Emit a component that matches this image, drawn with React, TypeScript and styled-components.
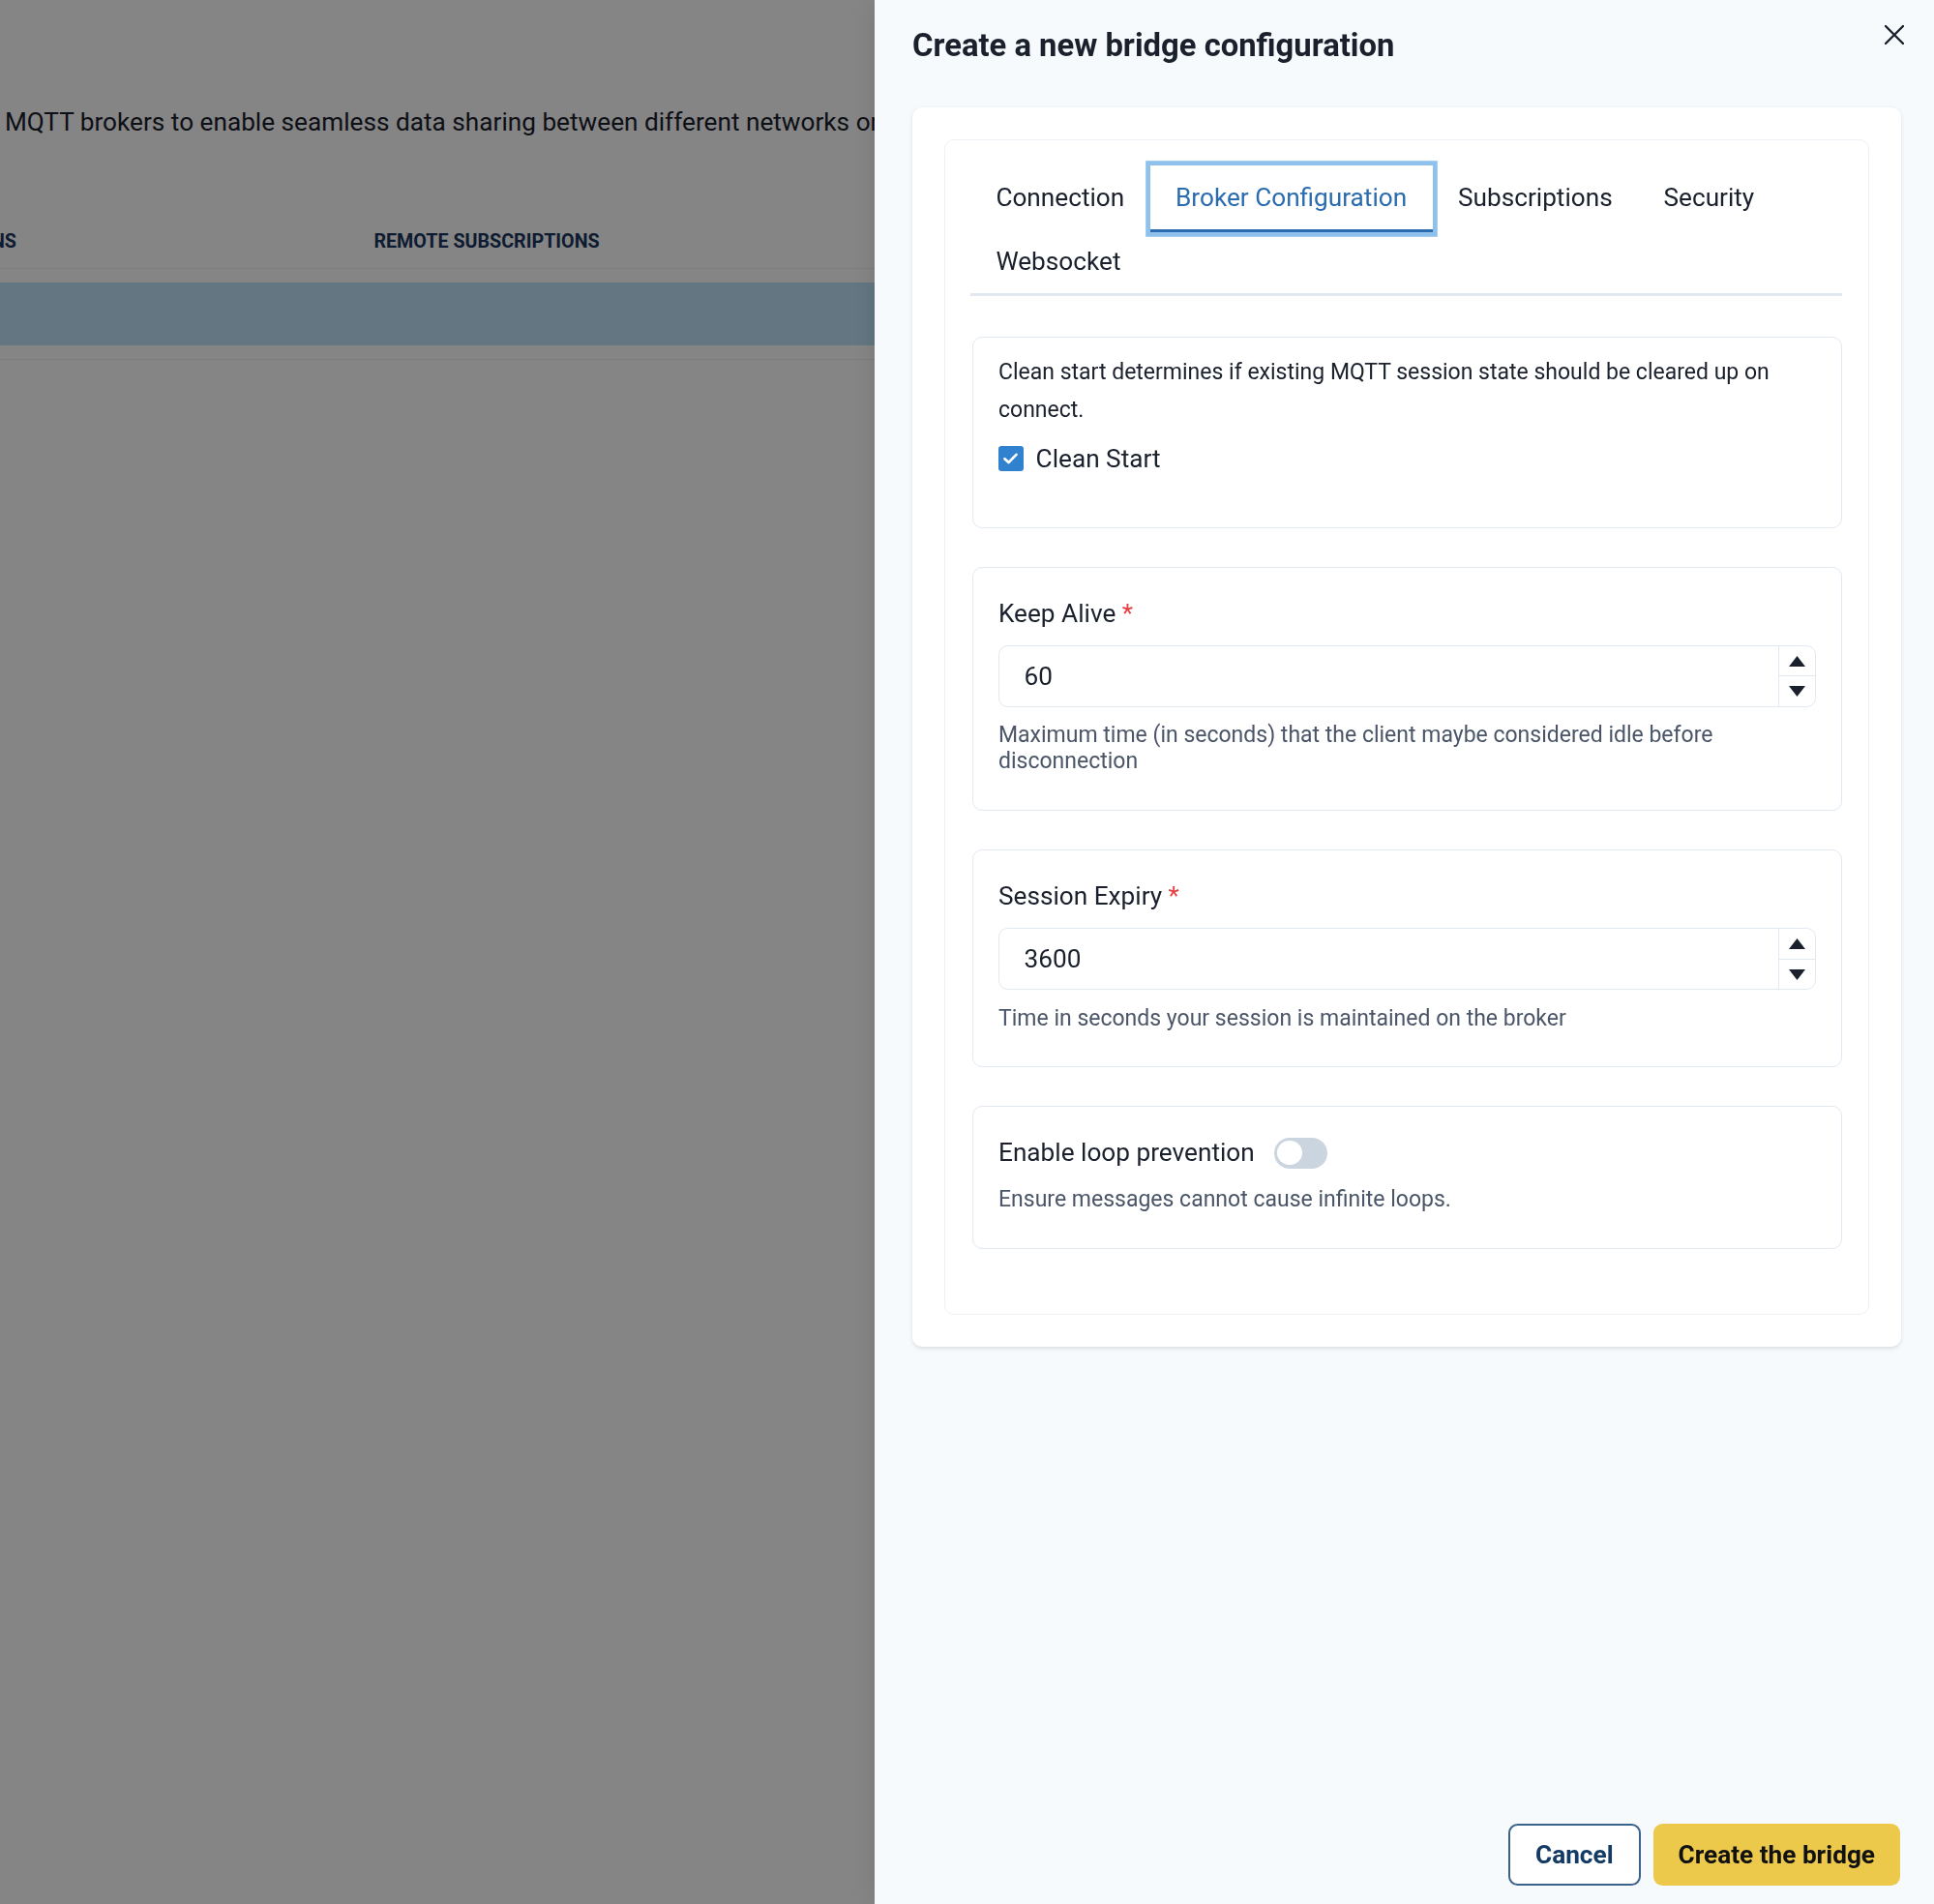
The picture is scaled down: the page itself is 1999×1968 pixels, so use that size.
import React, { useState } from 'react';
import styled, { createGlobalStyle } from 'styled-components';

const GlobalStyle = createGlobalStyle`
  html, body {
    margin: 0;
    padding: 0;
    background: #ffffff;
  }
  body {
    font-family: Roboto, 'Liberation Sans', Arial, sans-serif;
    color: #1a202c;
    -webkit-font-smoothing: antialiased;
  }
  * {
    box-sizing: border-box;
  }
`;

// page behind the drawer
const Page = styled.div`
  position: relative;
  width: 100%;
  height: 1968px;
  overflow: hidden;
  background: #ffffff;
`;

const Intro = styled.p`
  margin: 0;
  padding: 107px 0 0 5px;
  font-size: 26.2px;
  line-height: 39px;
  white-space: nowrap;
  color: #1a202c;
`;

const Table = styled.div`
  margin-top: 76px;
  margin-left: -238px;
  width: 2300px;
`;

const HeadRow = styled.div`
  display: grid;
  grid-template-columns: 586px 1fr;
  border-bottom: 1.6px solid #edf2f7;
`;

const Th = styled.div`
  padding: 19px 38.4px;
  font-size: 19.7px;
  line-height: 17px;
  font-weight: 700;
  text-transform: uppercase;
  white-space: nowrap;
  color: #1a365d;
`;

const BodyRow = styled.div`
  padding: 14px 0;
  border-bottom: 1.6px solid #edf2f7;
`;

const Highlight = styled.div`
  height: 65px;
  background: #bee3f8;
`;

const Overlay = styled.div`
  position: fixed;
  inset: 0;
  background: rgba(0, 0, 0, 0.48);
`;

// drawer
const Drawer = styled.aside`
  position: fixed;
  top: 0;
  right: 0;
  bottom: 0;
  width: 1095px;
  display: flex;
  flex-direction: column;
  background: #f7fafc;
  box-shadow: 0 0 24px rgba(0, 0, 0, 0.12);
`;

const DrawerHeader = styled.header`
  padding: 23px 38.4px 40px 39px;
`;

const Title = styled.h2`
  margin: 0;
  font-size: 32.8px;
  line-height: 48px;
  font-weight: 700;
  color: #1a202c;
`;

const CloseButton = styled.button`
  position: absolute;
  top: 11px;
  right: 16px;
  width: 50px;
  height: 50px;
  display: flex;
  align-items: center;
  justify-content: center;
  border: none;
  background: transparent;
  border-radius: 9.6px;
  cursor: pointer;
  color: #1a202c;
`;

const DrawerBody = styled.div`
  flex: 1;
  padding: 0 34px 0 39px;
`;

const OuterCard = styled.div`
  background: #ffffff;
  border-radius: 10px;
  padding: 33px;
  box-shadow: 0 1.6px 4.8px rgba(0, 0, 0, 0.08), 0 1.6px 3.2px rgba(0, 0, 0, 0.04);
`;

const InnerCard = styled.div`
  background: #ffffff;
  border: 1.6px solid #edf1f6;
  border-radius: 10px;
  padding: 26px 27px 0 26px;
`;

const TabList = styled.div`
  display: flex;
  flex-wrap: wrap;
  border-bottom: 3.2px solid #e2e8f0;
`;

const Tab = styled.button<{ $active?: boolean }>`
  padding: 13px 26.4px;
  margin-bottom: -3.2px;
  font-family: inherit;
  font-size: 26.2px;
  line-height: 40px;
  background: ${(p) => (p.$active ? '#ffffff' : 'transparent')};
  border: none;
  border-bottom: 3.2px solid ${(p) => (p.$active ? '#2b6cb0' : 'transparent')};
  color: ${(p) => (p.$active ? '#2b6cb0' : '#1a202c')};
  box-shadow: ${(p) => (p.$active ? '0 0 0 4.8px rgba(66, 153, 225, 0.6)' : 'none')};
  position: relative;
  z-index: ${(p) => (p.$active ? 1 : 0)};
  cursor: pointer;
`;

const Panel = styled.div`
  display: flex;
  flex-direction: column;
  gap: 40px;
  padding: 42px 0 67px 2px;
`;

const Section = styled.div<{ $top?: number; $bottom?: number }>`
  border: 1.6px solid #e2e8f0;
  border-radius: 10px;
  padding: ${(p) => p.$top ?? 28}px 26px ${(p) => p.$bottom ?? 36.5}px 26px;
`;

const Description = styled.p`
  margin: 0;
  font-size: 23px;
  line-height: 39px;
  color: #1a202c;
`;

const CheckRow = styled.label`
  display: flex;
  align-items: center;
  gap: 13px;
  margin-top: 12px;
  font-size: 26.2px;
  line-height: 38.4px;
  color: #1a202c;
`;

const CheckBox = styled.span<{ $checked: boolean }>`
  width: 25.6px;
  height: 25.6px;
  display: flex;
  align-items: center;
  justify-content: center;
  border-radius: 3.2px;
  border: 3.2px solid ${(p) => (p.$checked ? '#3182ce' : '#e2e8f0')};
  background: ${(p) => (p.$checked ? '#3182ce' : '#ffffff')};
`;

const Label = styled.div`
  font-size: 26.2px;
  line-height: 38.4px;
  font-weight: 400;
  color: #1a202c;
  margin-bottom: 14px;
`;

const Required = styled.span`
  margin-left: 6.4px;
  color: #e53e3e;
`;

const NumberBox = styled.div`
  display: flex;
  height: 64px;
  border: 1.6px solid #e2e8f0;
  border-radius: 9.6px;
  background: #ffffff;
`;

const NumberValue = styled.div`
  flex: 1;
  display: flex;
  align-items: center;
  padding-left: 25.6px;
  font-size: 26.2px;
  color: #1a202c;
`;

const Stepper = styled.div`
  width: 38px;
  display: flex;
  flex-direction: column;
  border-left: 1.6px solid #e2e8f0;
`;

const StepButton = styled.div<{ $down?: boolean }>`
  flex: 1;
  display: flex;
  align-items: center;
  justify-content: center;
  border-top: ${(p) => (p.$down ? '1.6px solid #e2e8f0' : 'none')};
`;

const Helper = styled.div`
  margin-top: 15.5px;
  font-size: 23px;
  line-height: 27px;
  color: #4a5568;
`;

const SwitchRow = styled.div`
  display: flex;
  align-items: center;
`;

const SwitchLabel = styled.span`
  font-size: 26.2px;
  line-height: 38.4px;
  font-weight: 400;
  color: #1a202c;
  margin-right: 20px;
`;

const Track = styled.button<{ $on: boolean }>`
  width: 55px;
  height: 32px;
  padding: 3.2px;
  border: none;
  border-radius: 999px;
  display: flex;
  justify-content: ${(p) => (p.$on ? 'flex-end' : 'flex-start')};
  background: ${(p) => (p.$on ? '#3182ce' : '#cbd5e0')};
  cursor: pointer;
`;

const Knob = styled.span`
  width: 25.6px;
  height: 25.6px;
  border-radius: 50%;
  background: #ffffff;
`;

const Footer = styled.footer`
  display: flex;
  justify-content: flex-end;
  gap: 13px;
  padding: 0 35px 19px 0;
`;

const Button = styled.button<{ $primary?: boolean }>`
  height: 64px;
  padding: 0 26px;
  border-radius: 9.6px;
  font-family: inherit;
  font-size: 26.2px;
  font-weight: 700;
  cursor: pointer;
  border: ${(p) => (p.$primary ? 'none' : '2px solid #3b6289')};
  background: ${(p) => (p.$primary ? '#ecc94b' : '#ffffff')};
  color: ${(p) => (p.$primary ? '#111111' : '#143b64')};
`;

const tabs = ['Connection', 'Broker Configuration', 'Subscriptions', 'Security', 'Websocket'];

function Triangle({ down }: { down?: boolean }) {
  return (
    <svg width="17" height="11" viewBox="0 0 17 11">
      <path d={down ? 'M0 0 H17 L8.5 11 Z' : 'M0 11 H17 L8.5 0 Z'} fill="#1a202c" />
    </svg>
  );
}

function NumberField({ label, value, help }: { label: string; value: number; help: string }) {
  return (
    <Section>
      <Label>
        {label}
        <Required>*</Required>
      </Label>
      <NumberBox>
        <NumberValue>{value}</NumberValue>
        <Stepper>
          <StepButton>
            <Triangle />
          </StepButton>
          <StepButton $down>
            <Triangle down />
          </StepButton>
        </Stepper>
      </NumberBox>
      <Helper>{help}</Helper>
    </Section>
  );
}

export default function App() {
  const [active, setActive] = useState(1);
  const [cleanStart, setCleanStart] = useState(true);
  const [loop, setLoop] = useState(false);

  return (
    <Page>
      <GlobalStyle />
      <Intro>MQTT brokers to enable seamless data sharing between different networks or organizations.</Intro>
      <Table>
        <HeadRow>
          <Th>Local subscriptions</Th>
          <Th>Remote subscriptions</Th>
        </HeadRow>
        <BodyRow>
          <Highlight />
        </BodyRow>
      </Table>
      <Overlay />
      <Drawer>
        <CloseButton aria-label="Close">
          <svg width="20" height="20" viewBox="0 0 20 20">
            <path d="M1 1 L19 19 M19 1 L1 19" stroke="#1a202c" strokeWidth="2.4" strokeLinecap="round" />
          </svg>
        </CloseButton>
        <DrawerHeader>
          <Title>Create a new bridge configuration</Title>
        </DrawerHeader>
        <DrawerBody>
          <OuterCard>
            <InnerCard>
              <TabList>
                {tabs.map((t, i) => (
                  <Tab key={t} $active={i === active} onClick={() => setActive(i)}>
                    {t}
                  </Tab>
                ))}
              </TabList>
              <Panel>
                <Section $top={16} $bottom={51.5}>
                  <Description>
                    Clean start determines if existing MQTT session state should be cleared up on connect.
                  </Description>
                  <CheckRow onClick={() => setCleanStart(!cleanStart)}>
                    <CheckBox $checked={cleanStart}>
                      {cleanStart && (
                        <svg width="15" height="12" viewBox="0 0 15 12">
                          <path d="M1.5 6.2 L5.5 10 L13.5 1.8" fill="none" stroke="#ffffff" strokeWidth="2.6" strokeLinecap="round" strokeLinejoin="round" />
                        </svg>
                      )}
                    </CheckBox>
                    Clean Start
                  </CheckRow>
                </Section>
                <NumberField
                  label="Keep Alive"
                  value={60}
                  help="Maximum time (in seconds) that the client maybe considered idle before disconnection"
                />
                <NumberField
                  label="Session Expiry"
                  value={3600}
                  help="Time in seconds your session is maintained on the broker"
                />
                <Section>
                  <SwitchRow>
                    <SwitchLabel>Enable loop prevention</SwitchLabel>
                    <Track $on={loop} onClick={() => setLoop(!loop)} aria-label="Enable loop prevention">
                      <Knob />
                    </Track>
                  </SwitchRow>
                  <Helper>Ensure messages cannot cause infinite loops.</Helper>
                </Section>
              </Panel>
            </InnerCard>
          </OuterCard>
        </DrawerBody>
        <Footer>
          <Button>Cancel</Button>
          <Button $primary>Create the bridge</Button>
        </Footer>
      </Drawer>
    </Page>
  );
}
